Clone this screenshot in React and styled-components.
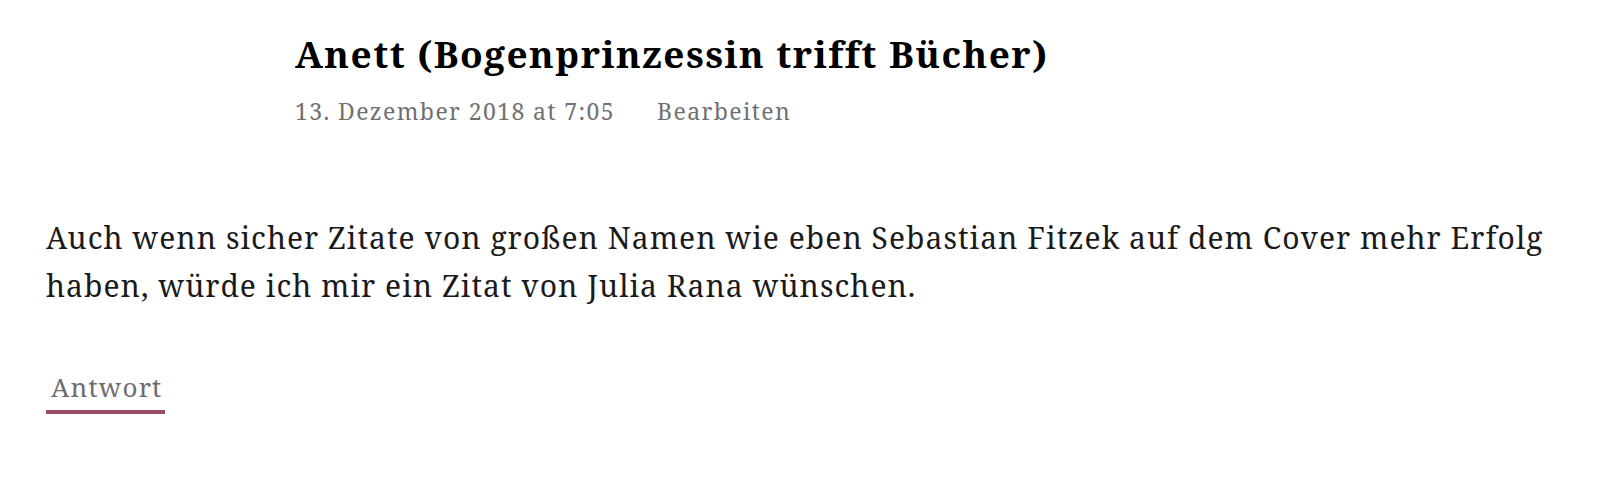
import styled, { createGlobalStyle } from "styled-components";

const GlobalStyle = createGlobalStyle`
  html, body {
    margin: 0;
    padding: 0;
    background: #fff;
  }
  body {
    font-family: "Noto Serif", "DejaVu Serif", "Liberation Serif", serif;
    color: #1a1a1a;
  }
`;

const Comment = styled.article`
  padding: 32px 40px 40px 46px;
`;

const CommentHeader = styled.header`
  display: flex;
  flex-direction: column;
  padding-left: 249px;
`;

const Author = styled.h3`
  margin: 0;
  font-size: 37px;
  line-height: 44px;
  font-weight: 700;
  letter-spacing: 1.5px;
  color: #000;
`;

const Meta = styled.div`
  display: flex;
  gap: 42px;
  margin-top: 19px;
  font-size: 23px;
  line-height: 32px;
  letter-spacing: 1.4px;
  color: #707070;
`;

const MetaLink = styled.a`
  color: inherit;
  text-decoration: none;
`;

const Body = styled.p`
  margin: 87px 0 0;
  width: 1520px;
  font-size: 30px;
  line-height: 48px;
  letter-spacing: 1.03px;
`;

const Reply = styled.a`
  display: inline-block;
  margin-top: 60px;
  padding: 0 3px 6px 5px;
  font-size: 26px;
  line-height: 34px;
  letter-spacing: 1.2px;
  color: #6d6d6d;
  text-decoration: none;
  border-bottom: 4px solid #9b4b66;
`;

export default function App() {
  return (
    <>
      <GlobalStyle />
      <Comment>
        <CommentHeader>
          <Author>Anett (Bogenprinzessin trifft Bücher)</Author>
          <Meta>
            <MetaLink href="#">13. Dezember 2018 at 7:05</MetaLink>
            <MetaLink href="#">Bearbeiten</MetaLink>
          </Meta>
        </CommentHeader>
        <Body>
          Auch wenn sicher Zitate von großen Namen wie eben Sebastian Fitzek auf
          dem Cover mehr Erfolg haben, würde ich mir ein Zitat von Julia Rana
          wünschen.
        </Body>
        <div>
          <Reply href="#">Antwort</Reply>
        </div>
      </Comment>
    </>
  );
}
